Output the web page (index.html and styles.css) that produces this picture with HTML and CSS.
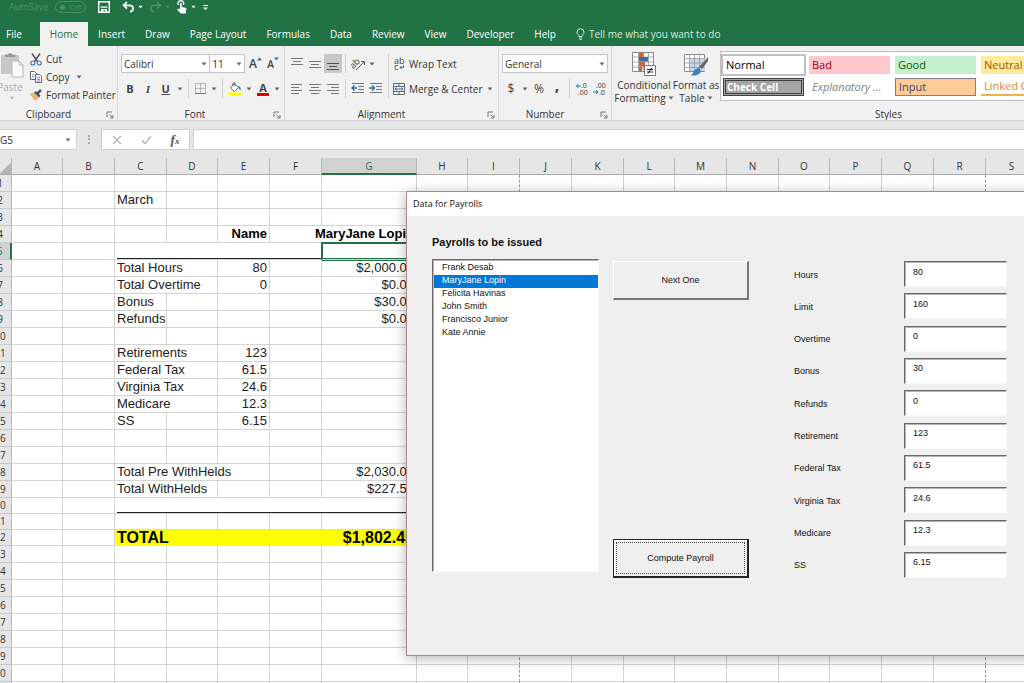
FILE: index.html
```html
<!DOCTYPE html>
<html lang="en">
<head>
  <meta charset="UTF-8" />
  <meta name="viewport" content="width=device-width, initial-scale=1.0"/>
  <title>Payroll - Excel</title>
  <link rel="stylesheet" href="styles.css">
</head>
<body>

  <!-- shared icons -->
  <svg class="sprite" aria-hidden="true">
    <symbol id="caret" viewBox="0 0 6 4"><path d="M.5.5h5L3 3.5z" fill="currentColor"/></symbol>
    <symbol id="launcher" viewBox="0 0 8 8"><path d="M1 6V1h5M3.5 3.5l3 3M7 4v3H4" fill="none" stroke="#777"/></symbol>
  </svg>

  <header class="title-bar">
    <span class="autosave">AutoSave</span>
    <button class="toggle" aria-label="AutoSave off"><i></i>Off</button>
    <button class="quick save" aria-label="Save">
      <svg width="12" height="12" viewBox="0 0 12 12"><path d="M.7.7h10.600v10.600H.7z" fill="none" stroke="#fff" stroke-width="1.4"/><path d="M2.500 5.500h7v1.200h-7zM3 8h6v3H7V9H5.500v2H3z" fill="#fff"/></svg>
    </button>
    <button class="quick" aria-label="Undo">
      <svg width="13" height="12" viewBox="0 0 13 12"><path d="M5 1L1.500 4.300 5 7.500M2 4.300h5.500c5 0 4.500 6 .5 6.500" fill="none" stroke="#fff" stroke-width="1.7"/></svg>
      <svg class="caret"><use href="#caret"/></svg>
    </button>
    <button class="quick dim" aria-label="Redo">
      <svg width="13" height="12" viewBox="0 0 13 12"><path d="M8 1l3.500 3.300L8 7.500M11 4.300H5.500c-5 0-4.500 6-.5 6.500" fill="none" stroke="currentColor" stroke-width="1.5"/></svg>
      <svg class="caret"><use href="#caret"/></svg>
    </button>
    <button class="quick" aria-label="Touch mode">
      <svg width="12" height="14" viewBox="0 0 12 14"><path d="M4 9V3.500c0-1.300 1.700-1.300 1.700 0V7l3.700.8c.8.2 1.100.7 1 1.500l-.6 2.500V13.500H4.800L1.500 10c-.5-.9.5-1.600 1.200-1.200z" fill="#fff"/><path d="M2.500 5a2.800 2.800 0 1 1 4.700 0" fill="none" stroke="#fff" stroke-width="1.3"/></svg>
      <svg class="caret"><use href="#caret"/></svg>
    </button>
    <button class="quick" aria-label="Customize toolbar">
      <svg width="7" height="7" viewBox="0 0 7 7"><path d="M1 1h5v1H1zM1 3.500h5L3.500 6z" fill="#fff"/></svg>
    </button>
  </header>

  <nav class="tabs">
    <a href="#" class="tab file">File</a>
    <a href="#" class="tab active">Home</a>
    <a href="#" class="tab">Insert</a>
    <a href="#" class="tab">Draw</a>
    <a href="#" class="tab">Page Layout</a>
    <a href="#" class="tab">Formulas</a>
    <a href="#" class="tab">Data</a>
    <a href="#" class="tab">Review</a>
    <a href="#" class="tab">View</a>
    <a href="#" class="tab">Developer</a>
    <a href="#" class="tab">Help</a>
    <a href="#" class="tab tell-me">
      <svg width="9" height="12" viewBox="0 0 9 12"><path d="M3 8.500C3 7 1 6.300 1 4.200a3.500 3.500 0 0 1 7 0C8 6.300 6 7 6 8.500zM3 10h3M3.500 11.500h2" fill="none" stroke="currentColor"/></svg>
      Tell me what you want to do
    </a>
  </nav>

  <section class="ribbon">
    <div class="group clipboard">
      <div class="group-body">
        <button class="paste">
          <svg width="24" height="26" viewBox="0 0 24 26"><path d="M1 3h18v19H1z" fill="#c9c7c8"/><path d="M5 5V2.500h3a2.200 2.200 0 0 1 4.200 0h3V5z" fill="#999"/><path d="M12 9h7l4 4v12H12z" fill="#fafafa" stroke="#b5b5b5"/><path d="M19 9v4h4" fill="none" stroke="#b5b5b5"/></svg>
          <span>Paste</span>
          <svg class="caret"><use href="#caret"/></svg>
        </button>
        <div class="clip-list">
          <button class="text-btn">
            <svg width="12" height="13" viewBox="0 0 12 13"><path d="M2 .5l5.500 8M10 .5l-5.500 8" fill="none" stroke="#555" stroke-width="1.5"/><circle cx="2.8" cy="10" r="2" fill="none" stroke="#4a7ab0" stroke-width="1.2"/><circle cx="9.2" cy="10" r="2" fill="none" stroke="#4a7ab0" stroke-width="1.2"/></svg>
            Cut
          </button>
          <button class="text-btn">
            <svg width="12" height="12" viewBox="0 0 12 12"><path d="M.5.5h4l2 2v6h-6z" fill="#fff" stroke="#666"/><path d="M5.500 3.500h4l2 2v6h-6z" fill="#fff" stroke="#666"/><path d="M2 3.500h2M2 5.500h2M7 6.500h3M7 8.500h3M7 10h3" stroke="#4a7ab0" stroke-width=".8"/></svg>
            Copy
            <svg class="caret"><use href="#caret"/></svg>
          </button>
          <button class="text-btn">
            <svg width="12" height="12" viewBox="0 0 12 12"><path d="M0 5l4-1.500 5 5L5 12z" fill="#e7b770"/><path d="M4 3.500L6 2l4.500 4.500L9 8.500z" fill="#555"/><path d="M7.500 4.500L11 1" stroke="#555" stroke-width="2.5"/></svg>
            Format Painter
          </button>
        </div>
      </div>
      <div class="group-name">Clipboard<svg class="launcher"><use href="#launcher"/></svg></div>
    </div>

    <div class="group font">
      <div class="group-body stack">
        <div class="tools">
          <div class="combo font-name"><select aria-label="Font"><option>Calibri</option></select><svg class="caret"><use href="#caret"/></svg></div>
          <div class="combo font-size"><select aria-label="Font size"><option>11</option></select><svg class="caret"><use href="#caret"/></svg></div>
          <button class="tool grow" aria-label="Increase font size">A<svg width="5" height="4" viewBox="0 0 5 4"><path d="M0 3.500L2.500.5 5 3.500z" fill="#3c6ea8"/></svg></button>
          <button class="tool shrink" aria-label="Decrease font size">A<svg width="5" height="4" viewBox="0 0 5 4"><path d="M0 .5h5L2.500 3.500z" fill="#3c6ea8"/></svg></button>
        </div>
        <div class="tools">
          <button class="tool bold">B</button>
          <button class="tool italic">I</button>
          <button class="tool underline">U</button>
          <button class="drop" aria-label="Underline options"><svg class="caret"><use href="#caret"/></svg></button>
          <i class="sep"></i>
          <button class="tool" aria-label="Borders"><svg width="11" height="11" viewBox="0 0 11 11"><path d="M.5.5h10v10H.5zM5.500.5v10M.5 5.500h10" fill="none" stroke="#888" stroke-dasharray="1 1"/><path d="M0 10.500h11" stroke="#777"/></svg></button>
          <button class="drop" aria-label="Border options"><svg class="caret"><use href="#caret"/></svg></button>
          <i class="sep"></i>
          <button class="tool" aria-label="Fill color"><svg width="14" height="14" viewBox="0 0 14 14"><path d="M6 1.500l4.500 4L6.500 9.500 2.500 6z" fill="#fff" stroke="#666"/><path d="M5 4V1.500c0-1.300 2-1.300 2 0V4" fill="none" stroke="#666"/><path d="M10 4c2.500.5 3 2 2.500 4.500L10.500 6z" fill="#3c6ea8"/><path d="M0 10.500h13v3H0z" fill="#ff0"/></svg></button>
          <button class="drop" aria-label="Fill options"><svg class="caret"><use href="#caret"/></svg></button>
          <button class="tool font-color" aria-label="Font color">A</button>
          <button class="drop" aria-label="Font color options"><svg class="caret"><use href="#caret"/></svg></button>
        </div>
      </div>
      <div class="group-name">Font<svg class="launcher"><use href="#launcher"/></svg></div>
    </div>

    <div class="group alignment">
      <div class="group-body">
        <div class="stack">
          <div class="tools">
            <button class="tool" aria-label="Top align"><svg width="12" height="12" viewBox="0 0 12 12"><path d="M0 .5h12M2 3.500h8M0 6.500h12" stroke="#777"/></svg></button>
            <button class="tool" aria-label="Middle align"><svg width="12" height="12" viewBox="0 0 12 12"><path d="M0 3.500h12M2 6.500h8M0 9.500h12" stroke="#777"/></svg></button>
            <button class="tool pressed" aria-label="Bottom align"><svg width="12" height="12" viewBox="0 0 12 12"><path d="M0 5.500h12M2 8.500h8M0 11.500h12" stroke="#555"/></svg></button>
            <i class="sep"></i>
            <button class="tool" aria-label="Orientation"><svg width="16" height="14" viewBox="0 0 16 14"><text x="1" y="9" font-size="9" fill="#444" transform="rotate(-45 6 8)">ab</text><path d="M6 13l8-8M14.500 8V4.500H11" fill="none" stroke="#555"/></svg></button>
            <button class="drop" aria-label="Orientation options"><svg class="caret"><use href="#caret"/></svg></button>
          </div>
          <div class="tools">
            <button class="tool" aria-label="Align left"><svg width="12" height="10" viewBox="0 0 12 10"><path d="M0 .5h11M0 3.500h8M0 6.500h11M0 9.500h8" stroke="#777"/></svg></button>
            <button class="tool" aria-label="Center"><svg width="12" height="10" viewBox="0 0 12 10"><path d="M0 .5h12M2 3.500h8M0 6.500h12M2 9.500h8" stroke="#777"/></svg></button>
            <button class="tool" aria-label="Align right"><svg width="12" height="10" viewBox="0 0 12 10"><path d="M0 .5h12M4 3.500h8M0 6.500h12M4 9.500h8" stroke="#777"/></svg></button>
            <i class="sep"></i>
            <button class="tool" aria-label="Decrease indent"><svg width="14" height="11" viewBox="0 0 14 11"><path d="M1 .5h12M7 3.500h6M7 6.500h6M1 9.500h12" stroke="#777"/><path d="M6 5H1.500M3.500 2.500L1 5l2.500 2.500" fill="none" stroke="#2e6cad" stroke-width="1.4"/></svg></button>
            <button class="tool" aria-label="Increase indent"><svg width="14" height="11" viewBox="0 0 14 11"><path d="M1 .5h12M7 3.500h6M7 6.500h6M1 9.500h12" stroke="#777"/><path d="M0 5h5M3 2.500L5.500 5 3 7.500" fill="none" stroke="#2e6cad" stroke-width="1.4"/></svg></button>
          </div>
        </div>
        <i class="sep tall"></i>
        <div class="stack">
          <button class="text-btn wide">
            <svg width="14" height="16" viewBox="0 0 14 16"><text x="2" y="8" font-size="9" fill="#444">ab</text><text x="2" y="14" font-size="9" fill="#444">c</text><path d="M11.500 9v2.500H8M9.500 10L8 11.500 9.500 13" fill="none" stroke="#2e6cad"/></svg>
            Wrap Text
          </button>
          <button class="text-btn wide">
            <svg width="14" height="14" viewBox="0 0 14 14"><path d="M1.500 1.500h11v11h-11zM1.500 4.500h11M1.500 9.500h11M7 1.500v3M7 9.500v3" fill="none" stroke="#666"/><path d="M3 7h8M4.500 5.500L3 7l1.500 1.500M9.500 5.500L11 7 9.500 8.500" fill="none" stroke="#2e6cad"/></svg>
            Merge &amp; Center
            <svg class="caret"><use href="#caret"/></svg>
          </button>
        </div>
      </div>
      <div class="group-name">Alignment<svg class="launcher"><use href="#launcher"/></svg></div>
    </div>

    <div class="group number">
      <div class="group-body stack">
        <div class="combo format"><select aria-label="Number format"><option>General</option></select><svg class="caret"><use href="#caret"/></svg></div>
        <div class="tools">
          <button class="tool symbol">$</button>
          <button class="drop" aria-label="Currency options"><svg class="caret"><use href="#caret"/></svg></button>
          <button class="tool symbol">%</button>
          <button class="tool comma">,</button>
          <i class="sep"></i>
          <button class="tool" aria-label="Increase decimal"><svg width="14" height="14" viewBox="0 0 14 14"><text x="6" y="6" font-size="7" fill="#333">.0</text><text x="3" y="13" font-size="7" fill="#333">.00</text><path d="M6 4H1.500M3.500 2L1.500 4l2 2" fill="none" stroke="#2e6cad"/></svg></button>
          <button class="tool" aria-label="Decrease decimal"><svg width="14" height="14" viewBox="0 0 14 14"><text x="3" y="6" font-size="7" fill="#333">.00</text><text x="6" y="13" font-size="7" fill="#333">.0</text><path d="M0 10h5M3 8l2 2-2 2" fill="none" stroke="#2e6cad"/></svg></button>
        </div>
      </div>
      <div class="group-name">Number<svg class="launcher"><use href="#launcher"/></svg></div>
    </div>

    <div class="group styles">
      <div class="group-body">
        <button class="big-btn">
          <svg width="26" height="26" viewBox="0 0 26 26"><path d="M1.500 1.500h21v19h-21z" fill="#fff" stroke="#888"/><path d="M7.500 1v20M12.500 1v20M17.500 1v20M1 6h22M1 11h22M1 16h22" stroke="#999" stroke-width=".8"/><path d="M8 1.500h4.500V6H8zM8 11h6v4.500H8zM8 16h3v4.500H8z" fill="#d0613f"/><path d="M8 6h9v4.500H8z" fill="#3c6ea8"/><path d="M13.500 14.500h11v10h-11z" fill="#fff" stroke="#777"/><path d="M16 18.500h6M16 21h6M21 16.500l-4 6" stroke="#222"/></svg>
          <span>Conditional</span>
          <span>Formatting <svg class="caret"><use href="#caret"/></svg></span>
        </button>
        <button class="big-btn">
          <svg width="26" height="26" viewBox="0 0 26 26"><path d="M1.500 3.500h20v17h-20z" fill="#fff" stroke="#888"/><path d="M7 8h15v12H7z" fill="#c3d6ea"/><path d="M6.500 3v18M11.500 3v18M16.500 3v18M1 7.500h21M1 12h21M1 16.500h21" stroke="#999" stroke-width=".8"/><path d="M25 6v4l-6 8-3-2z" fill="#666"/><path d="M15 17c2 0 3 2 2.500 4-1 3-6 4-10 3.500 3-1 3-6.500 7.500-7.500z" fill="#3f7fc1"/></svg>
          <span>Format as</span>
          <span>Table <svg class="caret"><use href="#caret"/></svg></span>
        </button>
        <div class="gallery">
          <button class="style normal">Normal</button>
          <button class="style bad">Bad</button>
          <button class="style good">Good</button>
          <button class="style neutral">Neutral</button>
          <button class="style check">Check Cell</button>
          <button class="style explain">Explanatory ...</button>
          <button class="style input">Input</button>
          <button class="style linked">Linked Cell</button>
        </div>
      </div>
      <div class="group-name">Styles</div>
    </div>
  </section>

  <section class="formula-bar">
    <div class="name-box"><input type="text" value="G5" aria-label="Name box"><svg class="caret"><use href="#caret"/></svg></div>
    <i class="dots"></i>
    <div class="formula-buttons">
      <button aria-label="Cancel"><svg width="10" height="10" viewBox="0 0 10 10"><path d="M1 1l8 8M9 1L1 9" stroke="#b5b5b5" stroke-width="1.2"/></svg></button>
      <button aria-label="Enter"><svg width="11" height="10" viewBox="0 0 11 10"><path d="M1 5.500L4 8.500 10 1.500" fill="none" stroke="#b5b5b5" stroke-width="1.5"/></svg></button>
      <button class="fx" aria-label="Insert function">f<small>x</small></button>
    </div>
    <input class="formula" type="text" aria-label="Formula">
  </section>

  <main class="sheet">
    <table class="grid" id="grid"></table>
  </main>

  <div class="dialog" role="dialog" aria-labelledby="dialogTitle">
    <div class="dialog-title" id="dialogTitle">Data for Payrolls</div>
    <form class="dialog-body">
      <label class="list-title" for="payrolls">Payrolls to be issued</label>
      <div class="panels">
        <select id="payrolls" class="list" size="24">
          <option>Frank Desab</option>
          <option selected>MaryJane Lopin</option>
          <option>Felicita Havinas</option>
          <option>John Smith</option>
          <option>Francisco Junior</option>
          <option>Kate Annie</option>
        </select>
        <div class="actions">
          <button type="button" class="action">Next One</button>
          <button type="button" class="action default"><span>Compute Payroll</span></button>
        </div>
        <div class="fields">
          <div class="field"><label for="hours">Hours</label><input id="hours" type="text" value="80"></div>
          <div class="field"><label for="limit">Limit</label><input id="limit" type="text" value="160"></div>
          <div class="field"><label for="overtime">Overtime</label><input id="overtime" type="text" value="0"></div>
          <div class="field"><label for="bonus">Bonus</label><input id="bonus" type="text" value="30"></div>
          <div class="field"><label for="refunds">Refunds</label><input id="refunds" type="text" value="0"></div>
          <div class="field"><label for="retirement">Retirement</label><input id="retirement" type="text" value="123"></div>
          <div class="field"><label for="federal">Federal Tax</label><input id="federal" type="text" value="61.5"></div>
          <div class="field"><label for="virginia">Virginia Tax</label><input id="virginia" type="text" value="24.6"></div>
          <div class="field"><label for="medicare">Medicare</label><input id="medicare" type="text" value="12.3"></div>
          <div class="field"><label for="ss">SS</label><input id="ss" type="text" value="6.15"></div>
        </div>
      </div>
    </form>
  </div>

  <script>
    const columns = "ABCDEFGHIJKLMNOPQRS".split("");
    const rowCount = 31;

    // span: columns the cell covers
    const cells = {
      C2: { text: "March" },
      E4: { text: "Name", cls: "right strong" },
      F4: { text: "MaryJane Lopin", cls: "right strong", span: 2 },
      C5: { cls: "rule", span: 4 },
      G5: { cls: "selected" },
      C6: { text: "Total Hours", span: 2 }, E6: { text: "80", cls: "right" }, G6: { text: "$2,000.00", cls: "right" },
      C7: { text: "Total Overtime", span: 2 }, E7: { text: "0", cls: "right" }, G7: { text: "$0.00", cls: "right" },
      C8: { text: "Bonus" }, G8: { text: "$30.00", cls: "right" },
      C9: { text: "Refunds" }, G9: { text: "$0.00", cls: "right" },
      C11: { text: "Retirements", span: 2 }, E11: { text: "123", cls: "right" },
      C12: { text: "Federal Tax", span: 2 }, E12: { text: "61.5", cls: "right" },
      C13: { text: "Virginia Tax", span: 2 }, E13: { text: "24.6", cls: "right" },
      C14: { text: "Medicare", span: 2 }, E14: { text: "12.3", cls: "right" },
      C15: { text: "SS" }, E15: { text: "6.15", cls: "right" },
      C18: { text: "Total Pre WithHelds", span: 3 }, G18: { text: "$2,030.00", cls: "right" },
      C19: { text: "Total WithHelds", span: 2 }, G19: { text: "$227.55", cls: "right" },
      C20: { cls: "rule", span: 5 },
      C22: { text: "TOTAL", cls: "total", span: 4 }, G22: { text: "$1,802.45", cls: "total right" }
    };

    const grid = document.getElementById("grid");

    function colClass(name) {
      if (name === "G") return "col-wide";
      return "ADHLO".includes(name) ? "col-narrow" : "col";
    }

    let html = '<colgroup><col class="col-head">' + columns.map(c => `<col class="${colClass(c)}">`).join("") + "</colgroup>";
    html += '<thead><tr><th class="corner"></th>';
    html += columns.map(c => `<th class="${c === "G" ? "current" : ""}">${c}</th>`).join("") + "</tr></thead><tbody>";

    for (let r = 1; r <= rowCount; r++) {
      html += `<tr class="${r >= 20 && r <= 22 ? "short" : ""}"><th class="${r === 5 ? "current" : ""}">${r}</th>`;
      for (let c = 0; c < columns.length; c++) {
        const cell = cells[columns[c] + r] || {};
        const span = cell.span || 1;
        const pageBreak = columns[c] === "I" || columns[c] === "R" ? " page-break" : "";
        html += `<td colspan="${span}" class="${cell.cls || ""}${pageBreak}"><div>${cell.text || ""}</div></td>`;
        c += span - 1;
      }
      html += "</tr>";
    }
    grid.innerHTML = html + "</tbody>";
  </script>
</body>
</html>
```

FILE: styles.css
```css
* { box-sizing: border-box; margin: 0; padding: 0; }

body {
  font-family: "Open Sans", "Segoe UI", sans-serif;
  font-size: 10px;
  line-height: 12px;
  color: #333;
  background: #fff;
  height: 100vh;
  overflow: hidden;
  position: relative;
}

button, input, select {
  font: inherit;
  color: inherit;
  background: none;
  border: none;
  border-radius: 0;
  outline: none;
}

button {
  display: flex;
  align-items: center;
  justify-content: center;
}

svg { flex: none; display: block; overflow: visible; }
.sprite { width: 0; height: 0; position: absolute; overflow: hidden; }
.caret { width: 6px; height: 4px; color: #666; }
.launcher { width: 8px; height: 8px; }

/* title bar */
.title-bar {
  background: #217346;
  height: 22px;
  padding: 0 9px 8px;
  display: flex;
  align-items: center;
  gap: 6px;
}

.autosave { color: #4d9069; font-size: 9px; width: 40px; }

.toggle {
  width: 31px;
  height: 12px;
  border: 1px solid #4d9069;
  border-radius: 6px;
  color: #4d9069;
  font-size: 8px;
  gap: 5px;
}

.toggle i { width: 5px; height: 5px; border-radius: 50%; background: #4d9069; }
.quick { gap: 3px; color: #fff; }
.quick .caret { color: #fff; width: 5px; }
.quick.save { margin: 0 6px; }
.quick.dim, .quick.dim .caret { color: #4d9069; }

/* tabs */
.tabs {
  background: #217346;
  height: 24px;
  display: flex;
  padding-left: 6px;
}

.tab {
  color: #fff;
  text-decoration: none;
  padding: 0 10px;
  line-height: 24px;
  white-space: nowrap;
}

.tab.file { padding-left: 0; margin-right: 8px; }
.tab.active { background: #f1f1f1; color: #217346; }
.tab.tell-me { display: flex; align-items: center; gap: 4px; color: #d5ead9; }

/* ribbon */
.ribbon {
  background: #f1f1f1;
  border-bottom: 1px solid #d2d2d2;
  display: flex;
  overflow: hidden;
}

.group { flex: none; border-right: 1px solid #d8d8d8; }
.clipboard { width: 118px; }
.font { width: 167px; }
.alignment { width: 214px; }
.number { width: 113px; }
.styles { width: 554px; }

.group-body { height: 62px; display: flex; padding: 8px 2px 0 3px; }
.stack { display: flex; flex-direction: column; gap: 6px; }
.group-name { text-align: center; position: relative; padding-right: 20px; }
.font .group-name { padding-right: 12px; }
.styles .group-name { padding: 0; }
.group-name .launcher { position: absolute; right: 3px; top: 3px; }
.tools { display: flex; height: 19px; }

.tool { width: 18px; height: 19px; font-size: 11px; color: #444; }
.drop { width: 10px; height: 19px; }
.sep { width: 1px; background: #d0d0d0; margin: 0 3px; flex: none; }
.sep.tall { height: 44px; }
.tool.pressed { background: #c8c8c8; }
.bold, .underline, .font-color { font-weight: 700; }
.italic { font-style: italic; font-weight: 700; font-family: "Liberation Serif", serif; }
.underline { text-decoration: underline; }
.symbol { font-size: 12px; }
.comma { font-size: 16px; font-weight: 700; padding-bottom: 8px; }
.grow { font-size: 12px; font-weight: 600; margin-left: 2px; }
.shrink { font-size: 10px; font-weight: 600; }
.grow svg, .shrink svg { margin-bottom: 9px; }

.font-color {
  border: solid #f1f1f1;
  border-width: 3px 3px 2px;
  box-shadow: inset 0 -3px #e60000;
  line-height: 10px;
  padding-bottom: 2px;
}

.combo {
  background: #fff;
  border: 1px solid #c6c6c6;
  height: 19px;
  display: flex;
  align-items: center;
  padding-right: 2px;
}

.combo select { appearance: none; flex: 1; min-width: 0; padding-left: 2px; }
.font-name { width: 91px; }
.font-size { width: 35px; border-left: none; }
.format { width: 106px; }

.text-btn { gap: 4px; height: 18px; justify-content: flex-start; white-space: nowrap; }
.text-btn.wide { gap: 3px; height: 19px; }
.text-btn .caret { margin-left: 3px; }
.text-btn.wide .caret { margin-left: 1px; }
.clipboard .group-body { padding: 4px 0 0; }
.clip-list { margin-left: 6px; }

.paste {
  flex-direction: column;
  justify-content: flex-start;
  width: 24px;
  gap: 3px;
  color: #aaa;
  padding-top: 2px;
}

.paste span { margin-left: -4px; }
.paste .caret { color: #bbb; }

.styles .group-body { padding: 5px 0 0 4px; }
.big-btn { flex-direction: column; justify-content: flex-start; width: 56px; line-height: 13px; }
.big-btn + .big-btn { width: 48px; }
.big-btn svg:first-child { margin-bottom: 2px; }
.big-btn span { display: flex; align-items: center; gap: 2px; white-space: nowrap; }

.gallery {
  background: #fff;
  border: 1px solid #c0c0c0;
  height: 50px;
  flex: 1;
  display: grid;
  grid-template-columns: repeat(4, 81px);
  grid-auto-rows: 18px;
  gap: 4px 5px;
  padding: 4px 2px;
  overflow: hidden;
}

.style { font-size: 11px; line-height: 12px; justify-content: flex-start; padding-left: 3px; white-space: nowrap; }
.normal { color: #000; outline: 2px solid #c0c0c0; }
.bad { background: #ffc7ce; color: #9c0006; }
.good { background: #c6efce; color: #006100; }
.neutral { background: #ffeb9c; color: #9c5700; }
.check { background: #a5a5a5; border: 3px double #3f3f3f; color: #fff; font-weight: 700; font-size: 10px; padding-left: 1px; }
.explain { color: #7f7f7f; font-style: italic; }
.input { background: #ffcc99; border: 1px solid #7f7f7f; color: #3f3f76; }
.linked { color: #d98a2b; border-bottom: 2px solid #f0b050; }

/* formula bar */
.formula-bar {
  background: #e6e6e6;
  height: 37px;
  display: flex;
  align-items: center;
}

.name-box, .formula-buttons, .formula { background: #fff; border: 1px solid #cfcfcf; height: 21px; }
.name-box { width: 77px; border-left: none; display: flex; align-items: center; padding-right: 5px; }
.name-box input { flex: 1; min-width: 0; }
.dots { width: 2px; height: 9px; border-left: 2px dotted #aaa; margin: 0 11px; }
.formula-buttons { width: 89px; display: flex; justify-content: space-around; align-items: center; }
.fx { font-family: "Liberation Serif", serif; font-style: italic; font-weight: 700; font-size: 13px; color: #555; }
.fx small { font-size: 9px; padding-top: 3px; }
.formula { flex: 1; margin-left: 3px; border-right: none; }

/* sheet */
.sheet { margin-left: -11px; overflow: hidden; }

.grid { table-layout: fixed; width: 1037px; border-collapse: separate; border-spacing: 0; }
.col-head { width: 23px; }
.col { width: 52px; }
.col-narrow { width: 51px; }
.col-wide { width: 95px; }

.grid th {
  font-weight: 400;
  background: #e6e6e6;
  border-right: 1px solid #b8b8b8;
  border-bottom: 1px solid #ababab;
  height: 17px;
  line-height: 15px;
  color: #333;
}

.grid tbody th { border-bottom-color: #c8c8c8; }
.grid th.corner { background: linear-gradient(135deg, #e6e6e6 70%, #b4b4b4 70%); }
.grid thead th.current { background: #d2d2d2; color: #217346; border-bottom: 2px solid #217346; line-height: 14px; }
.grid tbody th.current { background: #d2d2d2; color: #217346; border-right: 2px solid #217346; }

.grid td {
  border-right: 1px solid #d4d4d4;
  border-bottom: 1px solid #d4d4d4;
  height: 17px;
  padding: 0 2px;
  font-family: "Liberation Sans", Arial, sans-serif;
  font-size: 13px;
  line-height: 16px;
  color: #222;
  white-space: nowrap;
}

.grid .short th, .grid .short td { height: 16px; line-height: 15px; }
.grid td.right { text-align: right; }
.grid td.strong { font-weight: 700; color: #000; }
.grid td.page-break { border-right: 1px dashed #999; }
.grid td.rule div { border-bottom: 1px solid #222; height: 15px; margin-right: -3px; }
.grid .short td.rule div { height: 14px; }
.grid td.selected { box-shadow: 0 0 0 1px #217346, inset 0 0 0 1px #217346; }
.grid td.total { background: #ff0; border-color: #ff0; font-size: 16px; font-weight: 700; color: #000; }
.grid td.total div { height: 15px; }

/* user form */
.dialog {
  position: absolute;
  left: 406px;
  top: 191px;
  width: 640px;
  height: 465px;
  background: #efefef;
  border: 1px solid #b5858c;
  box-shadow: 0 2px 12px rgba(0, 0, 0, 0.3);
  font-family: "Liberation Sans", Arial, sans-serif;
  font-size: 9px;
  color: #111;
}

.dialog-title {
  background: #fff;
  font-family: "Open Sans", "Segoe UI", sans-serif;
  font-size: 9px;
  line-height: 24px;
  padding-left: 6px;
}

.dialog-body { padding: 20px 0 0 25px; }
.list-title { display: block; font-size: 11px; font-weight: 700; line-height: 12px; margin-bottom: 11px; }
.panels { display: flex; align-items: flex-start; }

.list, .field input {
  background: #fff;
  border: 1px solid;
  border-color: #6a6a6a #f8f8f8 #f8f8f8 #6a6a6a;
  box-shadow: inset 1px 1px #b4b4b4;
}

.list { width: 167px; height: 313px; padding: 2px 0 0 1px; overflow: hidden; }
.list option { padding: 0 8px; height: 13px; min-height: 13px; line-height: 13px; }
.list option:checked { background: #0078d7 linear-gradient(#0078d7, #0078d7); color: #fff; -webkit-text-fill-color: #fff; }

.actions {
  width: 136px;
  height: 317px;
  margin: 2px 45px 0 14px;
  display: flex;
  flex-direction: column;
  justify-content: space-between;
}

.action {
  height: 39px;
  background: #efefef;
  border: solid;
  border-width: 1px 2px 2px 1px;
  border-color: #fff #777 #777 #fff;
}

.action.default { border-color: #222; padding: 2px; box-shadow: inset 1px 1px #fff; }

.action.default span {
  flex: 1;
  align-self: stretch;
  border: 1px dotted #444;
  display: flex;
  align-items: center;
  justify-content: center;
}

.fields {
  width: 213px;
  height: 317px;
  margin-top: 2px;
  display: flex;
  flex-direction: column;
  justify-content: space-between;
}

.field { display: flex; justify-content: space-between; align-items: center; }
.field label { padding-top: 1px; }
.field input { width: 103px; height: 26px; padding: 0 8px 5px; }
```
